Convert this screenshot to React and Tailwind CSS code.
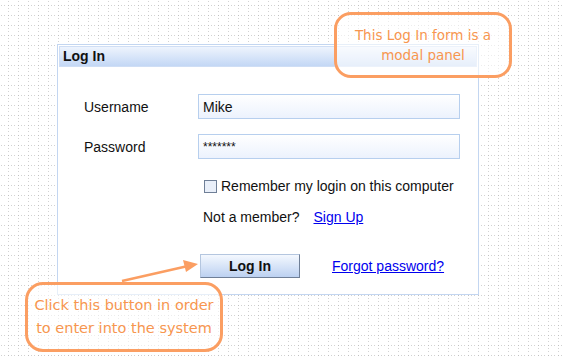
import React from 'react';

const DotGrid = () => (
  <svg className="absolute inset-0" width="562" height="358">
    <defs>
      <pattern id="dots" width="10" height="10" patternUnits="userSpaceOnUse">
        <rect x="1" y="5" width="1" height="1" fill="#d2d2d2" />
        <rect x="4" y="5" width="1" height="1" fill="#d2d2d2" />
        <rect x="8" y="5" width="1" height="1" fill="#c0c0c0" />
        <rect x="8" y="1" width="1" height="1" fill="#d2d2d2" />
        <rect x="8" y="8" width="1" height="1" fill="#d2d2d2" />
      </pattern>
    </defs>
    <rect width="562" height="358" fill="url(#dots)" />
  </svg>
);

const Field = ({ label, value, small }) => (
  <div className="flex items-center h-[25px]">
    <div className="w-[114px] text-[14px] pt-[2px]">{label}</div>
    <div
      className={`w-[262px] h-[25px] border border-[#b7cfee] bg-gradient-to-b from-white to-[#ecf2fd] pl-[4px] flex items-center ${
        small ? 'text-[12px]' : 'text-[14px] pt-[1px]'
      }`}
    >
      {value}
    </div>
  </div>
);

const App = () => {
  const sketch = { fontFamily: '"DejaVu Sans", "Noto Sans", sans-serif' };

  return (
    <div
      className="relative w-[562px] h-[358px] overflow-hidden bg-white text-[#111]"
      style={{ fontFamily: '"Liberation Sans", Arial, sans-serif' }}
    >
      <DotGrid />

      {/* Login panel */}
      <div className="relative ml-[57px] mt-[44px] w-[422px] h-[251px] border border-[#c3d6f1] bg-white p-px">
        <div className="h-[21px] border border-[#cfdef5] bg-gradient-to-b from-[#eef4fd] to-[#c3d7f5] pl-[3px] text-[14px] font-bold leading-[19px]">
          Log In
        </div>

        <div className="pl-[25px] pt-[27px] flex flex-col">
          <Field label="Username" value="Mike" />
          <div className="mt-[15px]">
            <Field label="Password" value="*******" small />
          </div>

          <div className="ml-[114px] mt-[17px] h-[20px] flex items-center text-[14px]">
            <div className="ml-[6px] w-[13px] h-[13px] border border-[#6f7f97] bg-[#e9eff9]" />
            <span className="ml-[4px] pt-[1px]">Remember my login on this computer</span>
          </div>

          <div className="ml-[114px] mt-[11px] h-[20px] flex items-center text-[14px] pt-[1px]">
            <span className="ml-[5px]">Not a member?</span>
            <a href="#" className="ml-[14px] text-[#0000ee] underline">Sign Up</a>
          </div>

          <div className="ml-[114px] mt-[27px] h-[24px] flex items-center">
            <button className="ml-[2px] w-[100px] h-[24px] border border-[#b4c6df] border-r-[#6f7f97] border-b-[#6f7f97] bg-gradient-to-b from-[#f4f8fe] to-[#bcd1f1] text-[14px] font-bold">
              Log In
            </button>
            <a href="#" className="ml-[32px] text-[14px] text-[#0000ee] underline pt-[1px]">Forgot password?</a>
          </div>
        </div>
      </div>

      {/* Callout: modal panel */}
      <div
        className="absolute left-[334px] top-[12px] w-[178px] h-[66px] rounded-[17px] border-[3px] border-[#fb9e62] bg-white/60 flex flex-col items-center justify-center text-[13.5px] leading-[20px] text-[#f7964f]"
        style={sketch}
      >
        <span>This Log In form is a</span>
        <span>modal panel</span>
      </div>

      {/* Arrow to button */}
      <svg className="absolute left-0 top-0" width="562" height="358">
        <line x1="122" y1="281" x2="188" y2="266" stroke="#fb9e62" strokeWidth="2.5" />
        <polygon points="198,264 183,260 186,272" fill="#fb9e62" />
      </svg>

      {/* Callout: button */}
      <div
        className="absolute left-[25px] top-[282px] w-[198px] h-[70px] rounded-[18px] border-[3px] border-[#fb9e62] bg-white/60 flex flex-col items-center justify-center text-[14.5px] leading-[23px] text-[#f7964f]"
        style={sketch}
      >
        <span>Click this button in order</span>
        <span>to enter into the system</span>
      </div>
    </div>
  );
};

export default App;
